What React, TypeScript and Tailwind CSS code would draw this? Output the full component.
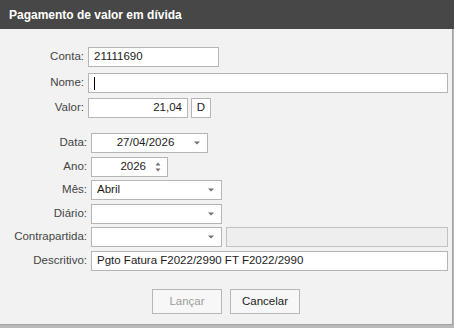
import React from "react";

const font = { fontFamily: '"Liberation Sans", Arial, sans-serif' };

const Arrow = () => (
  <svg width="6" height="4" viewBox="0 0 6 4" className="shrink-0">
    <path d="M0 0.5h6L3 3.5z" fill="#707070" />
  </svg>
);

const Spin = () => (
  <svg width="6" height="12" viewBox="0 0 6 12" className="shrink-0">
    <path d="M0.5 4.5h5L3 1.5z" fill="#707070" />
    <path d="M0.5 7.5h5L3 10.5z" fill="#707070" />
  </svg>
);

const Label = (props: { text: string; w: string }) => (
  <div className={`${props.w} shrink-0 pr-[4px] text-right text-[11.5px] text-[#454545]`}>{props.text}</div>
);

const Box = (props: { className: string; children?: React.ReactNode }) => (
  <div className={`flex h-[20px] items-center border border-[#b5b5b5] bg-white text-[11.5px] text-[#1c1c1c] ${props.className}`}>
    {props.children}
  </div>
);

const Combo = (props: { w: string; text?: string; center?: boolean }) => (
  <Box className={`${props.w} pl-[5px] pr-[7px]`}>
    <span className={`flex-1 ${props.center ? "text-center" : ""}`}>{props.text}</span>
    <Arrow />
  </Box>
);

export default function App() {
  return (
    <div className="h-[328px] w-[454px] bg-[#b9b9b9]" style={font}>
      <div className="flex h-[29px] items-center bg-[#474747] pl-[9px] text-[12px] font-bold text-white">
        Pagamento de valor em dívida
      </div>
      <div className="h-[296px] w-[453px] border-r border-b border-[#a3a3a3] bg-[#f2f2f2] pt-[18px]">
        {/* conta / nome / valor */}
        <div className="flex flex-col">
          <div className="flex items-center">
            <Label text="Conta:" w="w-[88px]" />
            <Box className="w-[131px] pl-[5px]">21111690</Box>
          </div>
          <div className="mt-[6px] flex items-center">
            <Label text="Nome:" w="w-[88px]" />
            <Box className="w-[360px] pl-[5px]">
              <span className="h-[13px] w-[1px] bg-black" />
            </Box>
          </div>
          <div className="mt-[5px] flex items-center">
            <Label text="Valor:" w="w-[88px]" />
            <Box className="w-[100px] justify-end pr-[5px]">21,04</Box>
            <Box className="ml-[3px] w-[20px] justify-center">D</Box>
          </div>
        </div>

        {/* data / ano / mes ... */}
        <div className="mt-[15px] flex flex-col">
          <div className="flex items-center">
            <Label text="Data:" w="w-[91px]" />
            <Combo w="w-[117px]" text="27/04/2026" center />
          </div>
          <div className="mt-[4px] flex items-center">
            <Label text="Ano:" w="w-[91px]" />
            <Box className="w-[77px] pr-[6px]">
              <span className="flex-1 pr-[9px] text-right">2026</span>
              <Spin />
            </Box>
          </div>
          <div className="mt-[3px] flex items-center">
            <Label text="Mês:" w="w-[91px]" />
            <Combo w="w-[131px]" text="Abril" />
          </div>
          <div className="mt-[4px] flex items-center">
            <Label text="Diário:" w="w-[91px]" />
            <Combo w="w-[131px]" />
          </div>
          <div className="mt-[3px] flex items-center">
            <Label text="Contrapartida:" w="w-[91px]" />
            <Combo w="w-[131px]" />
            <div className="ml-[4px] h-[20px] w-[222px] border border-[#c2c2c2] bg-[#eeeeee]" />
          </div>
          <div className="mt-[4px] flex items-center">
            <Label text="Descritivo:" w="w-[91px]" />
            <Box className="w-[357px] pl-[5px]">Pgto Fatura F2022/2990 FT F2022/2990</Box>
          </div>
        </div>

        <div className="mt-[18px] flex gap-[8px] pl-[152px]">
          <button className="h-[25px] w-[70px] border border-[#b7b7b7] bg-[#f7f7f7] text-[11.5px] text-[#9c9c9c]">
            Lançar
          </button>
          <button className="h-[25px] w-[70px] border border-[#b7b7b7] bg-[#f7f7f7] text-[11.5px] text-[#1c1c1c]">
            Cancelar
          </button>
        </div>
      </div>
    </div>
  );
}
